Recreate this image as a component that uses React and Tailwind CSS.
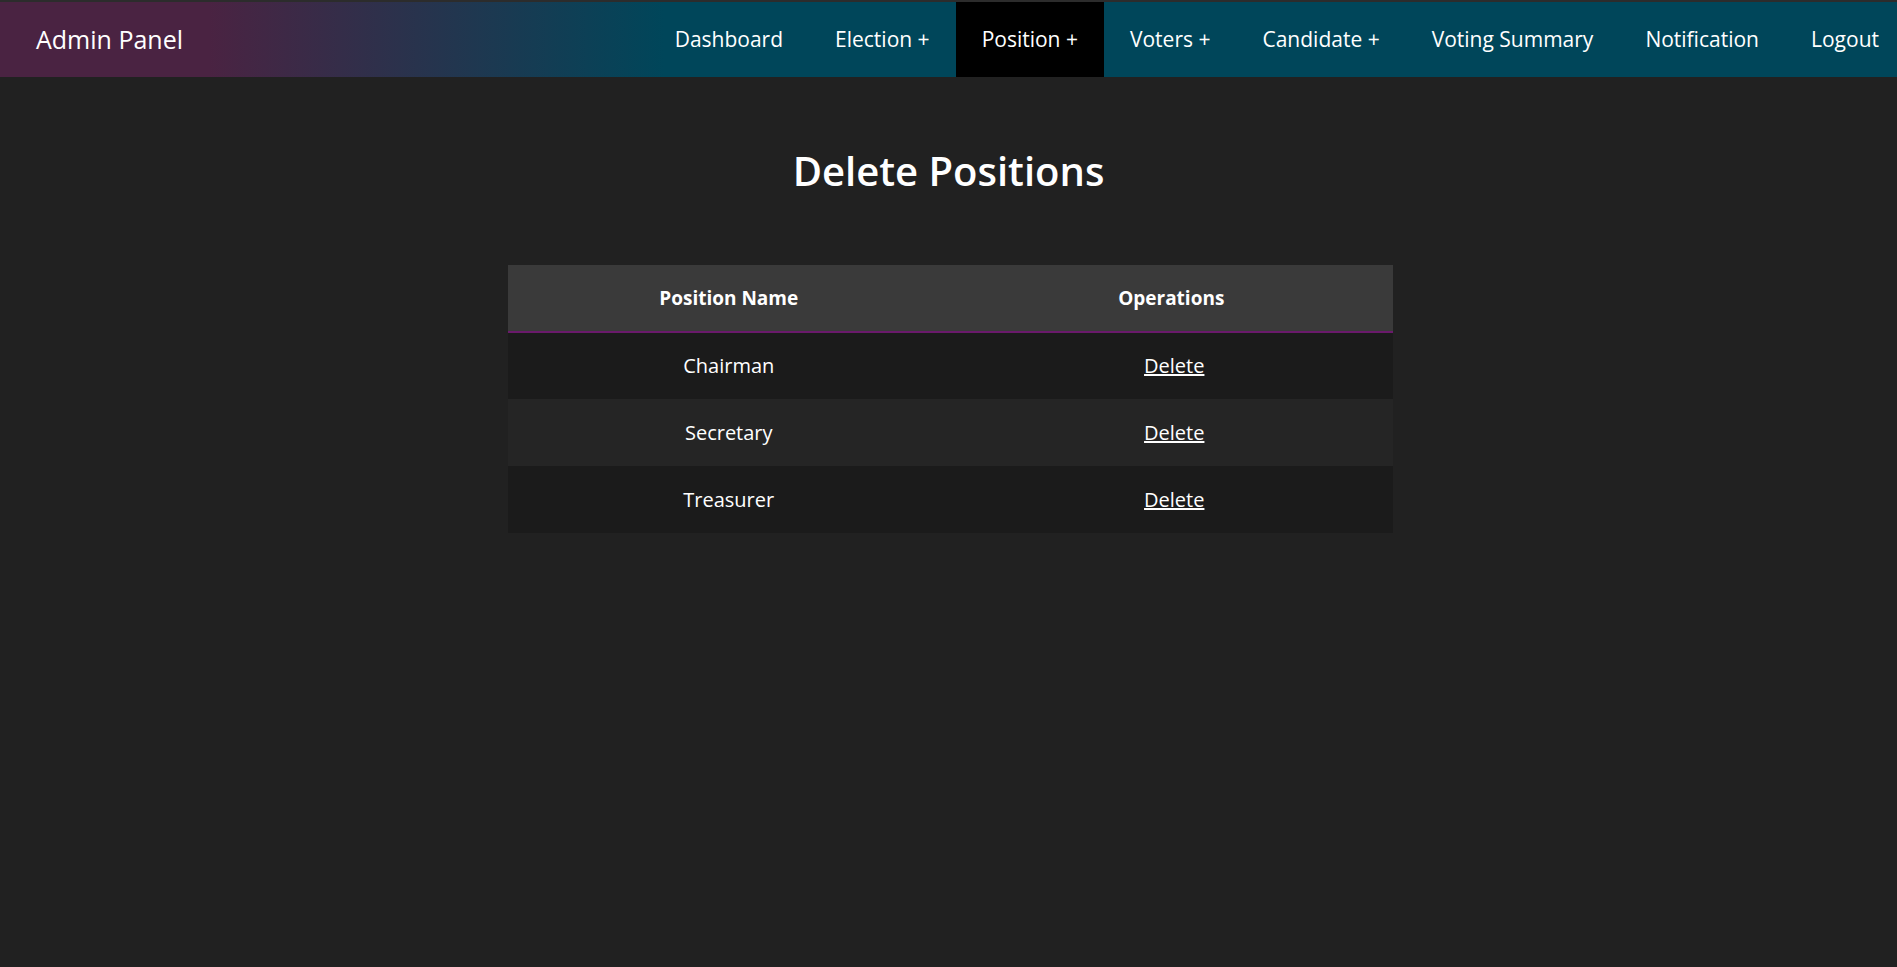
import React from "react";

const navItems = [
  "Dashboard",
  "Election +",
  "Position +",
  "Voters +",
  "Candidate +",
  "Voting Summary",
  "Notification",
  "Logout",
];

const positions = ["Chairman", "Secretary", "Treasurer"];

export default function App() {
  return (
    <div
      className="min-h-screen bg-[#212121] text-white"
      style={{ fontFamily: '"Open Sans", "Liberation Sans", sans-serif' }}
    >
      {/* Top navigation */}
      <div className="h-[2px] bg-[#2c2c2c]" />
      <nav className="flex h-[75px] items-center justify-between bg-[linear-gradient(to_right,#4a2342_11%,#00465a_35%)]">
        <div className="pl-9 text-[25px] leading-none">Admin Panel</div>
        <ul className="flex h-full items-stretch">
          {navItems.map((item) => (
            <li
              key={item}
              className={`flex items-center px-[26px] text-[21px] last:pr-[18px] ${
                item === "Position +" ? "bg-black" : ""
              }`}
            >
              {item}
            </li>
          ))}
        </ul>
      </nav>

      {/* Content */}
      <main className="flex flex-col items-center">
        <h1 className="mt-[70px] text-[40px] font-semibold leading-[48px]">
          Delete Positions
        </h1>

        <table className="ml-[3px] mt-[70px] w-[885px] table-fixed border-collapse text-center">
          <thead>
            <tr className="h-[67px] border-b-2 border-[#6a1a6b] bg-[#3a3a3a]">
              <th className="text-[19px] font-bold">Position Name</th>
              <th className="text-[19px] font-bold">Operations</th>
            </tr>
          </thead>
          <tbody>
            {positions.map((name, i) => (
              <tr
                key={name}
                className={`h-[67px] text-[20px] ${
                  i % 2 === 0 ? "bg-[#1b1b1b]" : "bg-[#252525]"
                }`}
              >
                <td>{name}</td>
                <td className="pl-[6px]">
                  <a href="#" className="underline">
                    Delete
                  </a>
                </td>
              </tr>
            ))}
          </tbody>
        </table>
      </main>
    </div>
  );
}
